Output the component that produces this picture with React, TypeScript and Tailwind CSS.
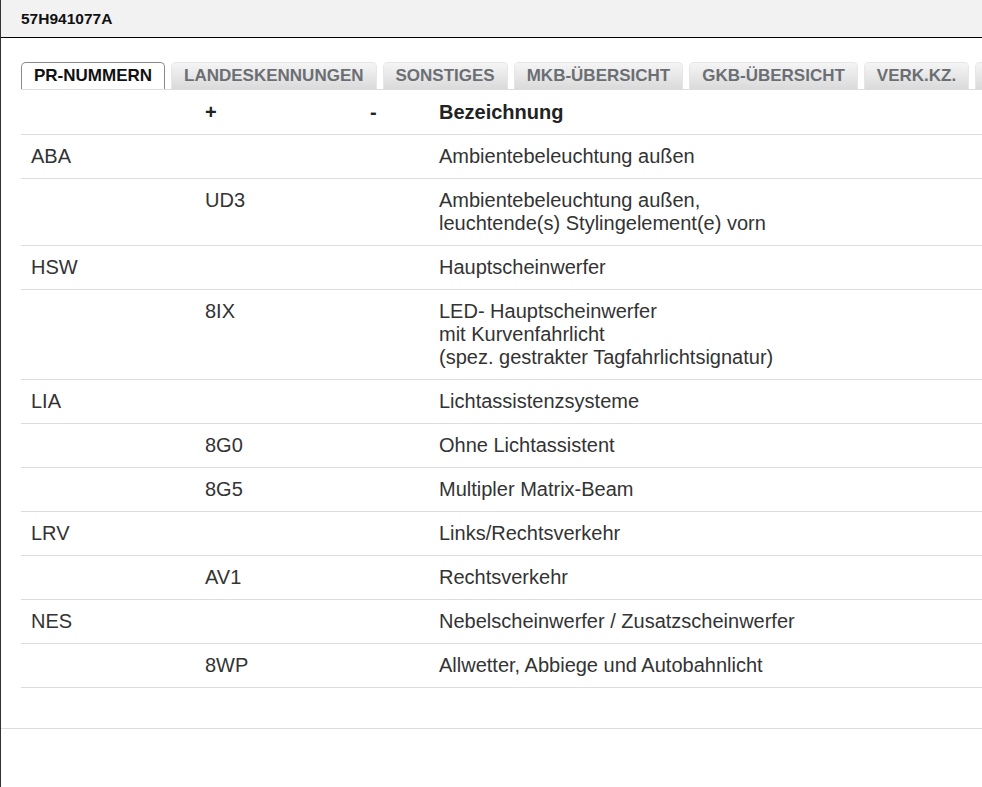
import React from 'react'

interface PrRow {
  family?: string
  code?: string
  lines: string[]
}

const TABS = ['PR-NUMMERN', 'LANDESKENNUNGEN', 'SONSTIGES', 'MKB-ÜBERSICHT', 'GKB-ÜBERSICHT', 'VERK.KZ.', '']

const ROWS: PrRow[] = [
  { family: 'ABA', lines: ['Ambientebeleuchtung außen'] },
  { code: 'UD3', lines: ['Ambientebeleuchtung außen,', 'leuchtende(s) Stylingelement(e) vorn'] },
  { family: 'HSW', lines: ['Hauptscheinwerfer'] },
  { code: '8IX', lines: ['LED- Hauptscheinwerfer', 'mit Kurvenfahrlicht', '(spez. gestrakter Tagfahrlichtsignatur)'] },
  { family: 'LIA', lines: ['Lichtassistenzsysteme'] },
  { code: '8G0', lines: ['Ohne Lichtassistent'] },
  { code: '8G5', lines: ['Multipler Matrix-Beam'] },
  { family: 'LRV', lines: ['Links/Rechtsverkehr'] },
  { code: 'AV1', lines: ['Rechtsverkehr'] },
  { family: 'NES', lines: ['Nebelscheinwerfer / Zusatzscheinwerfer'] },
  { code: '8WP', lines: ['Allwetter, Abbiege und Autobahnlicht'] },
]

export default function App() {
  return (
    <div
      className="flex h-[787px] w-[982px] flex-col overflow-hidden border-l border-[#333] bg-white text-[#333]"
      style={{ fontFamily: '"Liberation Sans", Arial, sans-serif' }}
    >
      {/* Header */}
      <div className="flex h-[38px] shrink-0 items-center border-b border-black bg-[#f2f2f2] pl-[20px]">
        <span className="text-[15.5px] font-bold text-[#111]">57H941077A</span>
      </div>

      {/* Main */}
      <div className="h-[691px] shrink-0 border-b border-[#ddd] pl-[20px] pt-[24px]">
        {/* Tabs */}
        <div className="flex gap-[6px] border-b border-[#ddd]">
          {TABS.map((tab, i) =>
            i === 0 ? (
              <div
                key={i}
                className="h-[27px] shrink-0 rounded-t-[5px] border border-b-0 border-[#8a8a8a] bg-white px-[12px] pt-[3px] text-[17px] leading-[20px] font-bold text-[#111]"
              >
                {tab}
              </div>
            ) : (
              <div
                key={i}
                className="h-[27px] min-w-[40px] shrink-0 rounded-t-[5px] border border-b-0 border-[#e6e6e6] bg-gradient-to-b from-[#f5f5f5] to-[#dadada] px-[12px] pt-[3px] text-[17px] leading-[20px] font-bold text-[#6b6f74]"
              >
                {tab}
              </div>
            )
          )}
        </div>

        {/* Table */}
        <div className="pt-px text-[20px] leading-[23px]">
          <div className="grid grid-cols-[174px_165px_69px_1fr] border-b border-[#ddd] font-bold text-[#222]">
            <div className="py-[10px] pl-[10px]" />
            <div className="py-[10px] pl-[10px]">+</div>
            <div className="py-[10px] pl-[10px]">-</div>
            <div className="py-[10px] pl-[10px]">Bezeichnung</div>
          </div>
          {ROWS.map((row, i) => (
            <div key={i} className="grid grid-cols-[174px_165px_69px_1fr] border-b border-[#ddd]">
              <div className="py-[10px] pl-[10px]">{row.family}</div>
              <div className="py-[10px] pl-[10px]">{row.code}</div>
              <div className="py-[10px] pl-[10px]" />
              <div className="py-[10px] pl-[10px]">
                {row.lines.map((line) => (
                  <div key={line}>{line}</div>
                ))}
              </div>
            </div>
          ))}
        </div>
      </div>

      <div className="flex-1" />
    </div>
  )
}
